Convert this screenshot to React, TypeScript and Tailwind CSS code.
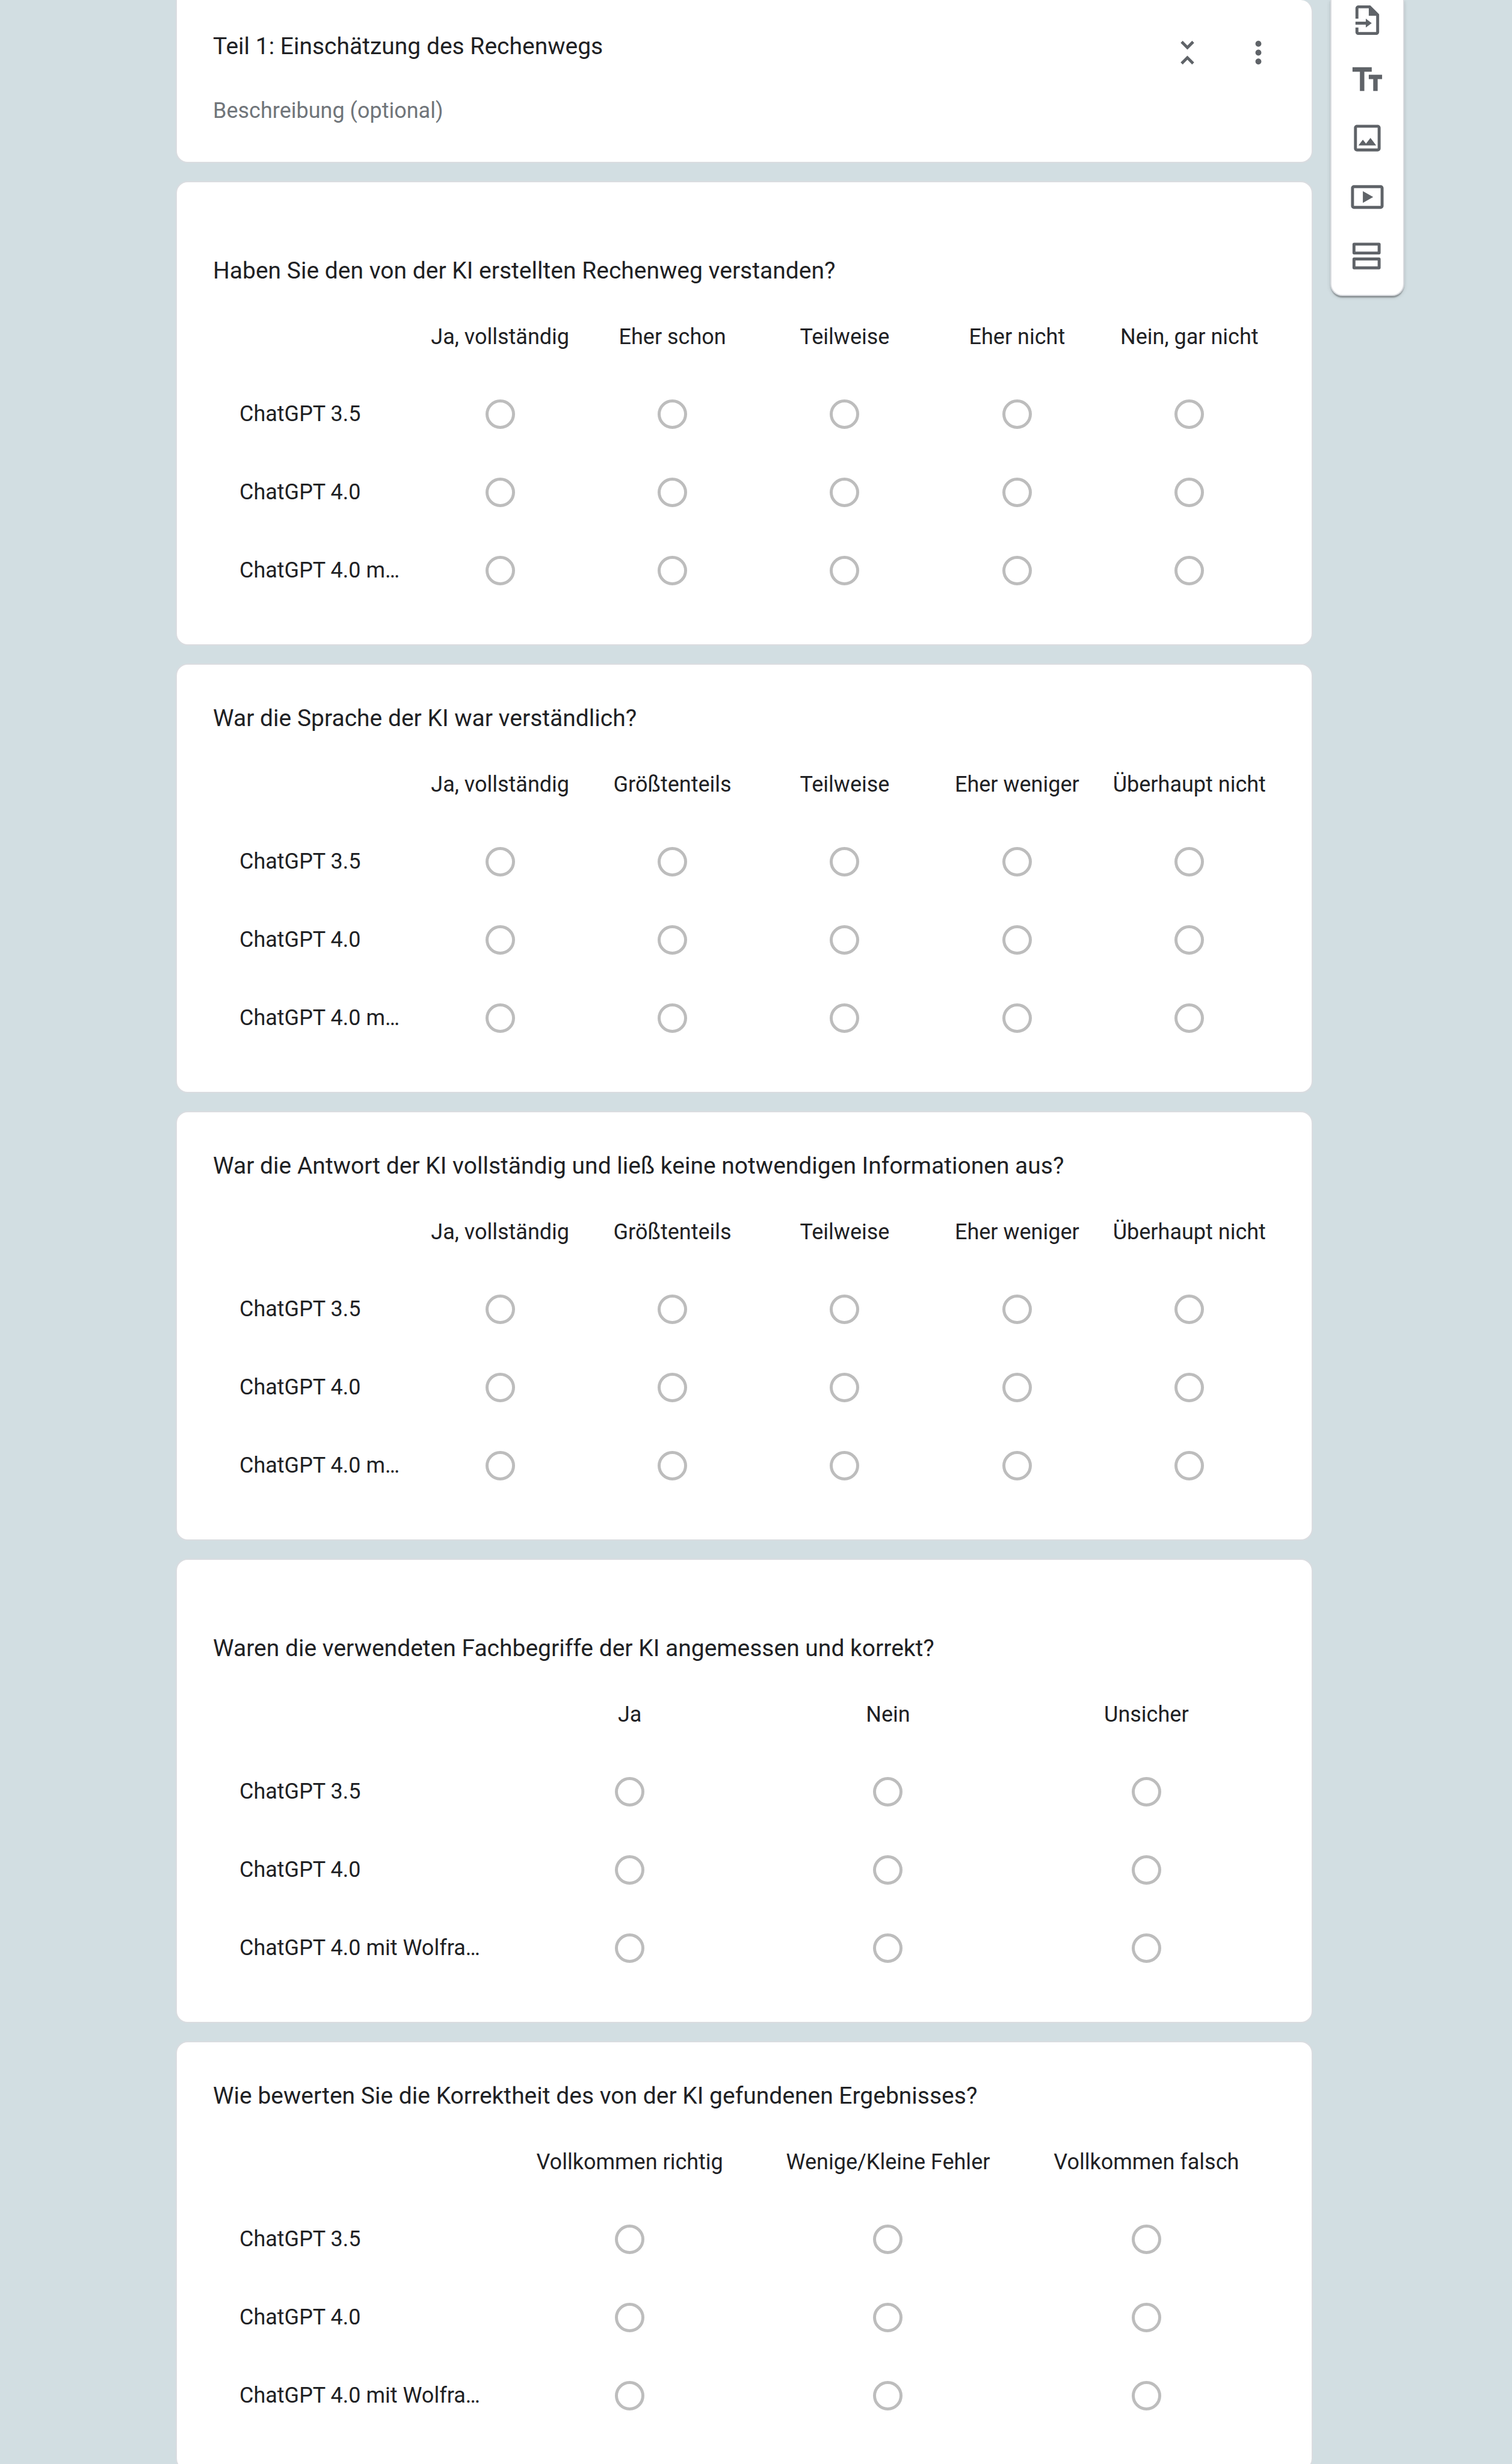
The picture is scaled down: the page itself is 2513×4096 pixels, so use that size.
import { useId } from "react";
import clsx from "clsx";

type Question = {
  title: string;
  columns: string[];
  rows: string[];
  tall?: boolean;
};

const shortRows = ["ChatGPT 3.5", "ChatGPT 4.0", "ChatGPT 4.0 m…"];
const longRows = ["ChatGPT 3.5", "ChatGPT 4.0", "ChatGPT 4.0 mit Wolfra…"];

const questions: Question[] = [
  {
    title: "Haben Sie den von der KI erstellten Rechenweg verstanden?",
    columns: ["Ja, vollständig", "Eher schon", "Teilweise", "Eher nicht", "Nein, gar nicht"],
    rows: shortRows,
    tall: true,
  },
  {
    title: "War die Sprache der KI war verständlich?",
    columns: ["Ja, vollständig", "Größtenteils", "Teilweise", "Eher weniger", "Überhaupt nicht"],
    rows: shortRows,
  },
  {
    title: "War die Antwort der KI vollständig und ließ keine notwendigen Informationen aus?",
    columns: ["Ja, vollständig", "Größtenteils", "Teilweise", "Eher weniger", "Überhaupt nicht"],
    rows: shortRows,
  },
  {
    title: "Waren die verwendeten Fachbegriffe der KI angemessen und korrekt?",
    columns: ["Ja", "Nein", "Unsicher"],
    rows: longRows,
    tall: true,
  },
  {
    title: "Wie bewerten Sie die Korrektheit des von der KI gefundenen Ergebnisses?",
    columns: ["Vollkommen richtig", "Wenige/Kleine Fehler", "Vollkommen falsch"],
    rows: longRows,
  },
];

const tools = [
  {
    label: "Fragen importieren",
    path: "M14 2H6c-1.1 0-2 .9-2 2v7h2V4h7v5h5v11H6v-3H4v3c0 1.1.9 2 2 2h12c1.1 0 2-.9 2-2V8l-6-6zM15 14l-4-3v2H4v2h7v2l4-3z",
  },
  {
    label: "Titel und Beschreibung hinzufügen",
    path: "M2 4v3h5v13h3V7h5V4H2zM22 9h-9v3h3v8h3v-8h3V9z",
  },
  {
    label: "Bild hinzufügen",
    path: "M19 5v14H5V5h14m0-2H5c-1.1 0-2 .9-2 2v14c0 1.1.9 2 2 2h14c1.1 0 2-.9 2-2V5c0-1.1-.9-2-2-2zm-4.86 8.86l-3 3.87L9 13.14 6 17h12l-3.86-5.14z",
  },
  {
    label: "Video hinzufügen",
    path: "M21 6v12H3V6h18m0-2H3c-1.1 0-2 .9-2 2v12c0 1.1.9 2 2 2h18c1.1 0 2-.9 2-2V6c0-1.1-.9-2-2-2zM9 8v8l7-4-7-4z",
  },
  {
    label: "Abschnitt hinzufügen",
    path: "M19 5v4H4V5h15m1-2H3c-.55 0-1 .45-1 1v6c0 .55.45 1 1 1h17c.55 0 1-.45 1-1V4c0-.55-.45-1-1-1zM19 15v4H4v-4h15m1-2H3c-.55 0-1 .45-1 1v6c0 .55.45 1 1 1h17c.55 0 1-.45 1-1v-6c0-.55-.45-1-1-1z",
  },
];

function Icon({ path }: { path: string }) {
  return (
    <svg viewBox="0 0 24 24" className="size-[59px] fill-[#5f6368]" aria-hidden="true">
      <path d={path} />
    </svg>
  );
}

function SectionHeader() {
  return (
    <header className="flex rounded-b-[20px] rounded-tr-[20px] border-2 border-t-0 border-[#dadce0] bg-white pr-[30px] pb-[61px] pl-[60px]">
      <div className="flex-1 pt-12">
        <h1 className="text-[39px] leading-[58px]">Teil 1: Einschätzung des Rechenwegs</h1>
        <input
          type="text"
          aria-label="Beschreibung"
          placeholder="Beschreibung (optional)"
          className="mt-[54px] block h-12 w-full text-[36px] leading-[48px] outline-none placeholder:text-[#70757a]"
        />
      </div>
      <div className="flex pt-7">
        <button type="button" aria-label="Abschnitt minimieren" className="grid size-[118px] place-items-center rounded-full">
          <Icon path="M7.41 18.59L8.83 20 12 16.83 15.17 20l1.41-1.41L12 14l-4.59 4.59zm9.18-13.18L15.17 4 12 7.17 8.83 4 7.41 5.41 12 10l4.59-4.59z" />
        </button>
        <button type="button" aria-label="Weitere Optionen" className="grid size-[118px] place-items-center rounded-full">
          <Icon path="M12 8c1.1 0 2-.9 2-2s-.9-2-2-2-2 .9-2 2 .9 2 2 2zm0 2c-1.1 0-2 .9-2 2s.9 2 2 2 2-.9 2-2-.9-2-2-2zm0 6c-1.1 0-2 .9-2 2s.9 2 2 2 2-.9 2-2-.9-2-2-2z" />
        </button>
      </div>
    </header>
  );
}

function QuestionCard({ title, columns, rows, tall }: Question) {
  const id = useId();
  return (
    <section
      aria-labelledby={id}
      className={clsx(
        "rounded-[20px] border-2 border-[#dadce0] bg-white pr-[60px] pb-[58px] pl-[60px]",
        tall ? "pt-[118px]" : "pt-[60px]",
      )}
    >
      <h2 id={id} className="text-[39px] leading-[58px]">
        {title}
      </h2>
      <div className="mt-[18px] pl-11">
        <table className="w-full table-fixed text-[36px] leading-[48px]">
          <thead>
            <tr className="h-[126px]">
              <td className={columns.length > 3 ? "w-[290px]" : "w-[434px]"} />
              {columns.map((column) => (
                <th key={column} scope="col" className="p-0 text-center align-middle font-normal whitespace-nowrap">
                  {column}
                </th>
              ))}
            </tr>
          </thead>
          <tbody>
            {rows.map((row) => (
              <tr key={row} className="h-[130px]">
                <th scope="row" className="p-0 text-left align-middle font-normal whitespace-nowrap">
                  {row}
                </th>
                {columns.map((column) => (
                  <td key={column} className="p-0 align-middle">
                    <input
                      type="radio"
                      name={`${id}-${row}`}
                      aria-label={`${row}: ${column}`}
                      className="mx-auto block size-[49px] appearance-none rounded-full border-[5px] border-[#bdbdbd] checked:border-[15px] checked:border-[#455a64]"
                    />
                  </td>
                ))}
              </tr>
            ))}
          </tbody>
        </table>
      </div>
    </section>
  );
}

function Toolbar() {
  return (
    <aside className="flex w-[123px] flex-col items-center gap-[39px] self-start rounded-b-[20px] border-2 border-t-0 border-[#dadce0] bg-white pt-1 pb-[35px] shadow-[0_5px_2px_-2px_rgba(0,0,0,0.2),0_2px_2px_0_rgba(0,0,0,0.14),0_2px_7px_0_rgba(0,0,0,0.12)]">
      {tools.map((tool) => (
        <button key={tool.label} type="button" aria-label={tool.label}>
          <Icon path={tool.path} />
        </button>
      ))}
    </aside>
  );
}

export default function App() {
  return (
    <div className="flex h-screen gap-[29px] overflow-hidden bg-[#d2dee2] pr-[179px] pl-[292px] font-['Roboto',sans-serif] text-[#202124]">
      <main className="flex min-w-0 flex-1 flex-col gap-[30px] self-start">
        <SectionHeader />
        {questions.map((question) => (
          <QuestionCard key={question.title} {...question} />
        ))}
      </main>
      <Toolbar />
    </div>
  );
}
